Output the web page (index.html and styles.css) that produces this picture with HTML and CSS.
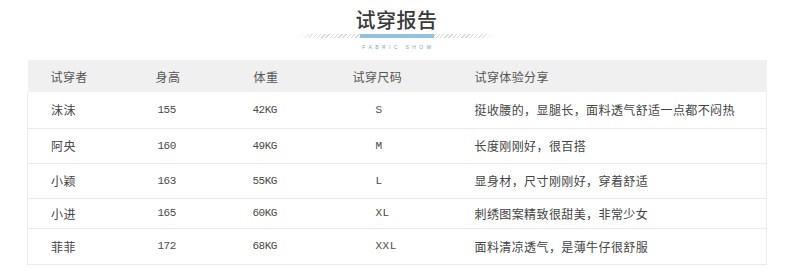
FILE: index.html
```html
<!DOCTYPE html>
<html lang="zh">
<head>
<meta charset="utf-8">
<title>试穿报告</title>
<link rel="stylesheet" href="styles.css">
</head>
<body>
<div class="page">
  <div class="head">
    <h1 class="title">试穿报告</h1>
    <div class="deco"><span class="bar"></span></div>
    <div class="sub">FABRIC SHOW</div>
  </div>
  <table class="report">
    <colgroup>
      <col class="c1"><col class="c2"><col class="c3"><col class="c4"><col class="c5">
    </colgroup>
    <thead>
      <tr><th>试穿者</th><th>身高</th><th>体重</th><th>试穿尺码</th><th>试穿体验分享</th></tr>
    </thead>
    <tbody>
      <tr class="r1"><td>沫沫</td><td class="num">155</td><td class="num w">42KG</td><td class="num size">S</td><td>挺收腰的，显腿长，面料透气舒适一点都不闷热</td></tr>
      <tr class="r2"><td>阿央</td><td class="num">160</td><td class="num w">49KG</td><td class="num size">M</td><td>长度刚刚好，很百搭</td></tr>
      <tr class="r3"><td>小颖</td><td class="num">163</td><td class="num w">55KG</td><td class="num size">L</td><td>显身材，尺寸刚刚好，穿着舒适</td></tr>
      <tr class="r4"><td>小进</td><td class="num">165</td><td class="num w">60KG</td><td class="num size">XL</td><td>刺绣图案精致很甜美，非常少女</td></tr>
      <tr class="r5"><td>菲菲</td><td class="num">172</td><td class="num w">68KG</td><td class="num size">XXL</td><td>面料清凉透气，是薄牛仔很舒服</td></tr>
    </tbody>
  </table>
</div>
</body>
</html>
```

FILE: styles.css
```css
* { box-sizing: border-box; }
html, body { margin: 0; padding: 0; background: #fff; }
body { font-family: "Noto Sans CJK SC", "Noto Sans", sans-serif; color: #555; }
.page { width: 790px; padding: 8px 0 0 27px; }
.head { width: 739px; display: flex; flex-direction: column; align-items: center; }
.title {
  margin: 0; font-size: 20px; line-height: 24px; font-weight: 500; color: #3a3a3a;
  letter-spacing: 0.5px;
}
.deco {
  margin-top: 2px; width: 204px; height: 4px; display: flex; justify-content: center;
  background: repeating-linear-gradient(135deg, #d8d8d8 0 1px, transparent 1px 3px);
  -webkit-mask-image: linear-gradient(90deg, transparent, #000 12%, #000 88%, transparent);
}
.bar { width: 74px; height: 4px; background: #93c1e1; }
.sub {
  margin-top: 6px; font-family: "Liberation Sans", sans-serif; font-size: 5px; line-height: 6px;
  letter-spacing: 3.4px; color: #7fa3c6; padding-left: 4px;
}
.report {
  margin-top: 10px; width: 739px; border-collapse: collapse; table-layout: fixed;
}
.c1 { width: 105px; } .c2 { width: 98px; } .c3 { width: 99px; } .c4 { width: 122px; } .c5 { width: 315px; }
.report th {
  background: #f0f0f0; height: 32px; padding: 0 0 0 23px; text-align: left;
  font-weight: 400; font-size: 12px; letter-spacing: 0.4px; color: #555;
}
.report td {
  height: 35px; padding: 0 0 0 23px; border-top: 1px solid #e9e9e9;
  font-size: 12px; letter-spacing: 0.4px; color: #444;
}
.report tr.r1 td { height: 36px; border-top: none; }
.report tr.r4 td { height: 30px; }
.report tr.r5 td { height: 36px; }
.report tbody tr { border-left: 1px solid #ececec; border-right: 1px solid #ececec; }
.report tbody tr:last-child { border-bottom: 1px solid #e9e9e9; }
.report td.num {
  font-family: "Liberation Mono", monospace; font-size: 11px; letter-spacing: -0.5px; color: #4a4a4a;
  padding-left: 25px;
}
.report td.w { padding-left: 22px; }
.report td.size { padding-left: 46px; letter-spacing: 0.5px; }
```
